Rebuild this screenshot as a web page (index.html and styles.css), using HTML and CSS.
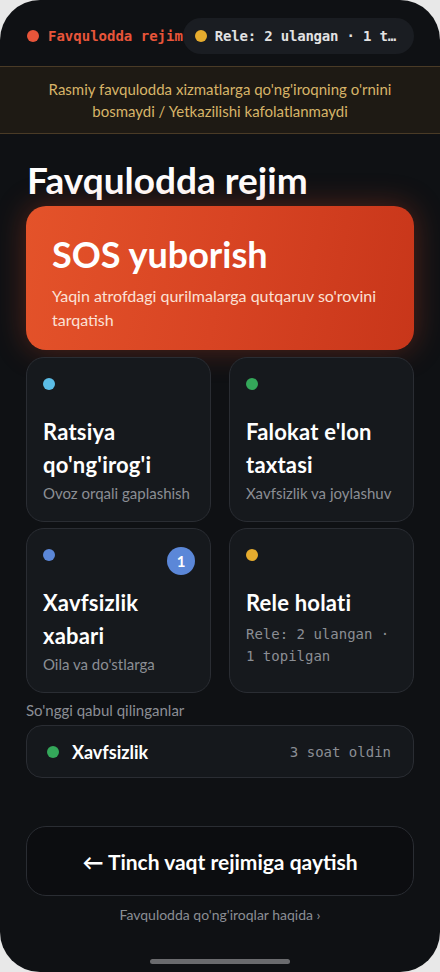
FILE: index.html
```html
<!DOCTYPE html>
<html lang="uz">
<head>
  <meta charset="UTF-8">
  <meta name="viewport" content="width=device-width, initial-scale=1.0">
  <title>Favqulodda rejim</title>
  <link rel="stylesheet" href="styles.css">
</head>
<body>
  <div class="phone">
    <div class="topbar">
      <span class="mode"><span class="dot dot-red"></span>Favqulodda rejim</span>
      <span class="relay-pill"><span class="dot dot-yellow"></span><span class="relay-text">Rele: 2 ulangan · 1 topilgan</span></span>
    </div>

    <div class="warning">
      Rasmiy favqulodda xizmatlarga qo'ng'iroqning o'rnini bosmaydi / Yetkazilishi kafolatlanmaydi
    </div>

    <main class="content">
      <h1>Favqulodda rejim</h1>

      <button class="sos">
        <span class="sos-title">SOS yuborish</span>
        <span class="sos-sub">Yaqin atrofdagi qurilmalarga qutqaruv so'rovini tarqatish</span>
      </button>

      <div class="grid">
        <div class="card">
          <div class="card-top"><span class="dot dot-cyan"></span></div>
          <div class="card-title">Ratsiya qo'ng'irog'i</div>
          <div class="card-sub">Ovoz orqali gaplashish</div>
        </div>
        <div class="card">
          <div class="card-top"><span class="dot dot-green"></span></div>
          <div class="card-title">Falokat e'lon taxtasi</div>
          <div class="card-sub">Xavfsizlik va joylashuv</div>
        </div>
        <div class="card">
          <div class="card-top"><span class="dot dot-blue"></span><span class="badge">1</span></div>
          <div class="card-title">Xavfsizlik xabari</div>
          <div class="card-sub">Oila va do'stlarga</div>
        </div>
        <div class="card">
          <div class="card-top"><span class="dot dot-yellow"></span></div>
          <div class="card-title">Rele holati</div>
          <div class="card-sub mono">Rele: 2 ulangan · 1 topilgan</div>
        </div>
      </div>

      <div class="section-label">So'nggi qabul qilinganlar</div>
      <div class="recent">
        <span class="dot dot-green"></span>
        <span class="recent-name">Xavfsizlik</span>
        <span class="recent-time">3 soat oldin</span>
      </div>

      <button class="back">← Tinch vaqt rejimiga qaytish</button>
      <a class="about" href="#">Favqulodda qo'ng'iroqlar haqida ›</a>
    </main>

    <div class="home-bar"></div>
  </div>
</body>
</html>
```

FILE: styles.css
```css
:root {
  --bg: #0f1114;
  --card-bg: #16191d;
  --card-border: #2a2d33;
  --muted: #8b8e94;
  --mono: "DejaVu Sans Mono", "Liberation Mono", monospace;
}
body {
  margin: 0;
  background: #e8e8e8;
  font-family: Lato, "Noto Sans", sans-serif;
  color: #fff;
}
.phone {
  width: 440px;
  height: 972px;
  box-sizing: border-box;
  background: var(--bg);
  border-radius: 40px;
  overflow: hidden;
  display: flex;
  flex-direction: column;
}
.dot {
  display: inline-block;
  width: 12px;
  height: 12px;
  border-radius: 50%;
  flex: none;
}
.dot-red { background: #e8553a; }
.dot-yellow { background: #e6ac2e; }
.dot-cyan { background: #5bbde6; }
.dot-green { background: #34a85a; }
.dot-blue { background: #5b87d8; }

.topbar {
  display: flex;
  align-items: center;
  padding: 18px 26px 12px 27px;
  font-family: var(--mono);
  font-weight: bold;
  font-size: 14px;
}
.mode {
  display: flex;
  align-items: center;
  gap: 9px;
  color: #e8553a;
  white-space: nowrap;
}
.relay-pill {
  display: flex;
  align-items: center;
  gap: 8px;
  min-width: 0;
  flex: 1;
  height: 36px;
  padding: 0 12px 0 12px;
  background: #1a1d22;
  border-radius: 18px;
  color: #e2e2e2;
}
.relay-text {
  white-space: nowrap;
  overflow: hidden;
  text-overflow: ellipsis;
  letter-spacing: -0.2px;
}

.warning {
  background: #1e1a14;
  border-top: 1px solid #4a3b26;
  border-bottom: 1px solid #4a3b26;
  color: #d7b468;
  font-size: 15px;
  line-height: 22px;
  text-align: center;
  padding: 11px 40px;
}

.content {
  flex: 1;
  padding: 0 26px;
  display: flex;
  flex-direction: column;
}
h1 {
  margin: 24px 0 4px 1px;
  font-size: 37px;
  line-height: 44px;
  font-weight: bold;
}

.sos {
  display: flex;
  flex-direction: column;
  align-items: flex-start;
  text-align: left;
  border: none;
  border-radius: 20px;
  padding: 26px 26px 18px;
  background: linear-gradient(100deg, #e4532a 0%, #d84423 50%, #c8361a 100%);
  box-shadow: 0 0 30px rgba(214, 68, 35, 0.35);
  color: #fff;
  font-family: inherit;
  cursor: pointer;
}
.sos-title {
  font-size: 36px;
  font-weight: bold;
  line-height: 44px;
}
.sos-sub {
  margin-top: 8px;
  font-size: 16px;
  line-height: 24px;
  color: #fbe1d6;
}

.grid {
  display: grid;
  grid-template-columns: 1fr 1fr;
  gap: 6px 18px;
  margin-top: 7px;
}
.card {
  background: var(--card-bg);
  border: 1px solid var(--card-border);
  border-radius: 18px;
  height: 165px;
  box-sizing: border-box;
  padding: 20px 16px 0;
  display: flex;
  flex-direction: column;
}
.card-top {
  display: flex;
  justify-content: space-between;
  align-items: flex-start;
  height: 37px;
}
.badge {
  width: 28px;
  height: 28px;
  border-radius: 50%;
  background: #5b87d8;
  color: #fff;
  font-size: 15px;
  font-weight: bold;
  display: flex;
  align-items: center;
  justify-content: center;
  margin-top: -2px;
  margin-right: -1px;
}
.card-title {
  font-size: 22px;
  line-height: 33px;
  font-weight: bold;
  letter-spacing: 0.2px;
}
.card-sub {
  margin-top: 2px;
  font-size: 15px;
  line-height: 20px;
  color: var(--muted);
}
.card-sub.mono {
  font-family: var(--mono);
  font-size: 14px;
  line-height: 22px;
  margin-top: 4px;
}

.section-label {
  margin-top: 8px;
  font-size: 15px;
  color: var(--muted);
}
.recent {
  margin-top: 6px;
  display: flex;
  align-items: center;
  gap: 13px;
  height: 53px;
  box-sizing: border-box;
  padding: 0 22px 0 20px;
  background: #15181c;
  border: 1px solid var(--card-border);
  border-radius: 16px;
}
.recent-name {
  font-size: 18px;
  font-weight: bold;
  flex: 1;
}
.recent-time {
  font-family: var(--mono);
  font-size: 14px;
  color: var(--muted);
}

.back {
  margin-top: 48px;
  height: 70px;
  border: 1px solid var(--card-border);
  border-radius: 20px;
  background: #0c0d10;
  color: #fff;
  font-family: inherit;
  font-size: 21px;
  font-weight: bold;
  cursor: pointer;
}
.about {
  margin-top: 10px;
  text-align: center;
  font-size: 14px;
  color: var(--muted);
  text-decoration: none;
}

.home-bar {
  width: 140px;
  height: 5px;
  border-radius: 3px;
  background: #6a6b6e;
  margin: 0 auto 8px;
}
```
